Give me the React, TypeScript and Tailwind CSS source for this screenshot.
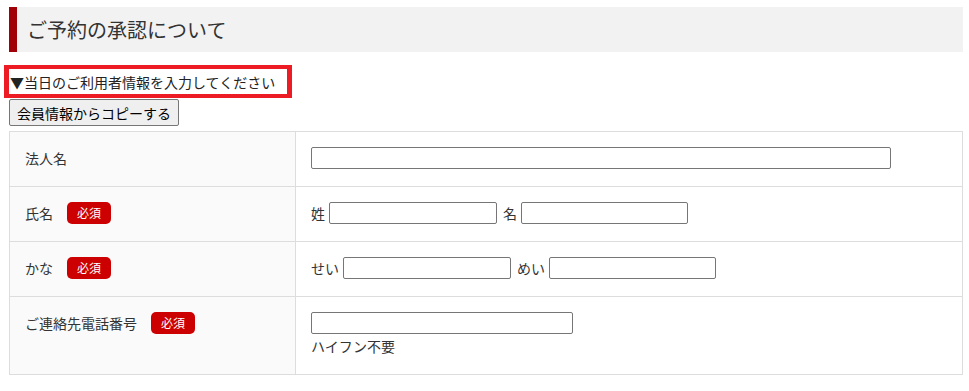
import React from 'react';

const font = "font-['Noto_Sans_CJK_JP','Noto_Sans',sans-serif]";

function Badge() {
  return (
    <span className="ml-[14px] inline-flex h-[22px] w-[44px] items-center justify-center rounded-[5px] bg-[#cc0000] text-[12px] leading-none text-white">
      必須
    </span>
  );
}

function Input({ w }: { w: string }) {
  return (
    <input
      type="text"
      className={`h-[22px] ${w} rounded-[2px] border border-[#767676] bg-white px-1 text-[14px] outline-none`}
    />
  );
}

function Row({
  label,
  required,
  children,
  last,
}: {
  label: string;
  required?: boolean;
  children: React.ReactNode;
  last?: boolean;
}) {
  return (
    <>
      <div
        className={`border-r border-[#dddddd] bg-[#fafafa] pl-[15px] pt-[15px] pb-[17px] ${
          last ? '' : 'border-b'
        }`}
      >
        <div className="flex h-[22px] items-center">
          <span>{label}</span>
          {required && <Badge />}
        </div>
      </div>
      <div className={`pl-[15px] pr-[16px] pt-[15px] pb-[17px] ${last ? '' : 'border-b border-[#dddddd]'}`}>
        {children}
      </div>
    </>
  );
}

export default function App() {
  return (
    <div className={`${font} min-h-[391px] bg-white pl-[9px] pr-[6px] pt-[7px] text-[14px] text-[#333333]`}>
      {/* Heading */}
      <div className="flex h-[45px] items-center border-l-8 border-[#a00008] bg-[#f2f2f2] pl-[10px]">
        <h2 className="text-[20px] leading-none text-[#333333]">ご予約の承認について</h2>
      </div>

      {/* Section note */}
      <div className="-ml-[5px] mt-[13px] flex h-[33px] w-[288px] items-center border-x-[5px] border-y-4 border-[#ed1c24] pl-px text-[14px] leading-none text-[#222222]">
        ▼当日のご利用者情報を入力してください
      </div>

      <button className="mt-px flex h-[27px] items-center rounded-[2px] border border-[#767676] bg-[#efefef] px-[7px] text-[14px] leading-none text-black">
        会員情報からコピーする
      </button>

      {/* Form table */}
      <div className="mt-[5px] grid grid-cols-[286px_1fr] border border-[#dddddd]">
        <Row label="法人名">
          <Input w="w-[580px]" />
        </Row>
        <Row label="氏名" required>
          <div className="flex h-[22px] items-center">
            <span className="mr-[4px]">姓</span>
            <Input w="w-[168px]" />
            <span className="ml-[6px] mr-[4px]">名</span>
            <Input w="w-[167px]" />
          </div>
        </Row>
        <Row label="かな" required>
          <div className="flex h-[22px] items-center">
            <span className="mr-[4px]">せい</span>
            <Input w="w-[168px]" />
            <span className="ml-[6px] mr-[4px]">めい</span>
            <Input w="w-[167px]" />
          </div>
        </Row>
        <Row label="ご連絡先電話番号" required last>
          <div className="flex flex-col items-start">
            <Input w="w-[262px]" />
            <span className="mt-px leading-[22px]">ハイフン不要</span>
          </div>
        </Row>
      </div>
    </div>
  );
}
